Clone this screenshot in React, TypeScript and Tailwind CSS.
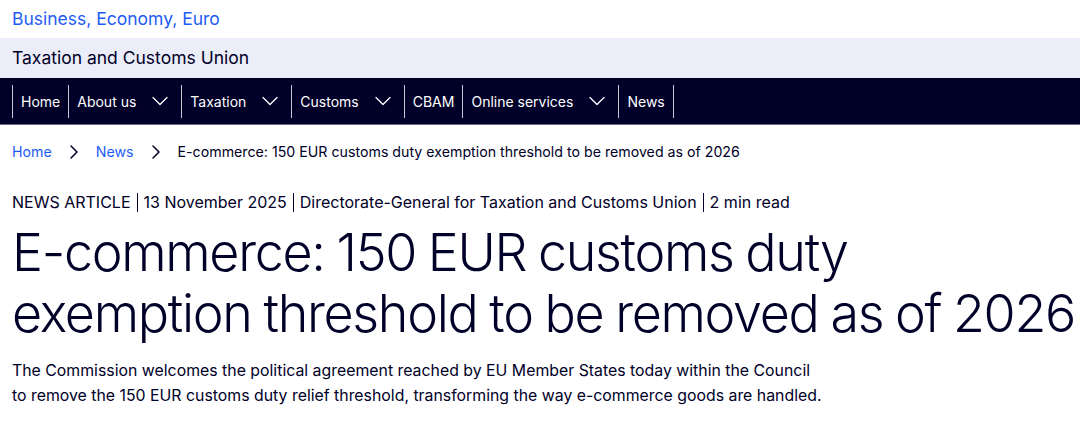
import { ChevronDown, ChevronRight } from 'lucide-react'

const navItems: { label: string; menu?: boolean }[] = [
  { label: 'Home' },
  { label: 'About us', menu: true },
  { label: 'Taxation', menu: true },
  { label: 'Customs', menu: true },
  { label: 'CBAM' },
  { label: 'Online services', menu: true },
  { label: 'News' },
]

const meta = [
  'NEWS ARTICLE',
  '13 November 2025',
  'Directorate-General for Taxation and Customs Union',
  '2 min read',
]

export default function App() {
  return (
    <div className="w-[1080px] h-[430px] overflow-hidden bg-white text-[#000028] font-['Inter',sans-serif]">
      {/* Site name */}
      <div className="h-[38px] px-3 flex items-center">
        <span className="text-[17.5px] text-[#1f5cf5]">Business, Economy, Euro</span>
      </div>

      {/* Site title band */}
      <div className="h-[40px] px-3 flex items-center bg-[#ebedf8]">
        <span className="text-[17.5px]">Taxation and Customs Union</span>
      </div>

      {/* Main nav */}
      <nav className="h-[47px] px-3 flex items-center bg-[#000028] border-b border-[#6b6b8a] text-white">
        {navItems.map((item, i) => (
          <div
            key={item.label}
            className={`h-[33px] flex items-center border-l border-[#c9c9d4] px-2 ${i === navItems.length - 1 ? 'border-r' : ''}`}
          >
            <span className="text-[14px]">{item.label}</span>
            {item.menu && (
              <ChevronDown size={28} strokeWidth={1.1} className="ml-[10px] -mr-[1px]" />
            )}
          </div>
        ))}
      </nav>

      {/* Breadcrumb */}
      <div className="px-3 pt-[17px] h-[37px] flex items-center text-[14.2px] leading-[20px]">
        <span className="text-[#1f5cf5]">Home</span>
        <ChevronRight size={24} strokeWidth={1.5} className="mx-[10px]" />
        <span className="text-[#1f5cf5]">News</span>
        <ChevronRight size={24} strokeWidth={1.5} className="mx-[10px]" />
        <span>E-commerce: 150 EUR customs duty exemption threshold to be removed as of 2026</span>
      </div>

      {/* Meta */}
      <div className="px-3 mt-[28px] h-[24px] flex items-center text-[16px] leading-[24px]">
        {meta.map((m, i) => (
          <span key={m} className="flex items-center">
            {i > 0 && <span className="mx-[6px] h-[19px] w-px bg-[#000028]" />}
            {m}
          </span>
        ))}
      </div>

      {/* Title */}
      <h1 className="pl-3 mt-[8px] text-[52px] leading-[61px] font-light tracking-[-1.3px] [word-spacing:-1.5px] whitespace-nowrap">
        E-commerce: 150 EUR customs duty
        <br />
        exemption threshold to be removed as of 2026
      </h1>

      {/* Lead */}
      <p className="px-3 mt-[14px] text-[15.85px] leading-[25px]">
        The Commission welcomes the political agreement reached by EU Member States today within the Council
        <br />
        to remove the 150 EUR customs duty relief threshold, transforming the way e-commerce goods are handled.
      </p>
    </div>
  )
}
